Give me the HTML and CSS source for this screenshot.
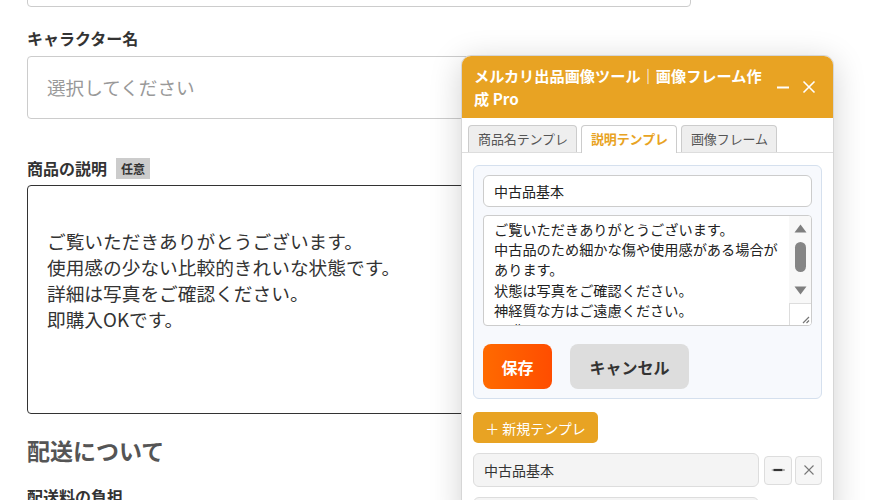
FILE: index.html
```html
<!DOCTYPE html>
<html lang="ja">
<head>
<meta charset="utf-8">
<link rel="stylesheet" href="styles.css">
</head>
<body>
<main class="page">
  <div class="box-top"></div>
  <div class="label">キャラクター名</div>
  <div class="select">選択してください</div>
  <div class="label label-desc">商品の説明<span class="badge">任意</span></div>
  <div class="desc">ご覧いただきありがとうございます。<br>使用感の少ない比較的きれいな状態です。<br>詳細は写真をご確認ください。<br>即購入OKです。</div>
  <h2 class="section">配送について</h2>
  <div class="label label-ship">配送料の負担</div>
</main>

<section class="panel">
  <header class="panel-head">
    <div class="panel-title">メルカリ出品画像ツール｜画像フレーム作成 Pro</div>
    <div class="panel-ctrls">
      <svg width="14" height="14" viewBox="0 0 14 14"><path d="M1 7.5H13" stroke="#fff" stroke-width="2"/></svg>
      <svg width="14" height="14" viewBox="0 0 14 14"><path d="M1.5 1.5L12.5 12.5M12.5 1.5L1.5 12.5" stroke="#fff" stroke-width="1.6"/></svg>
    </div>
  </header>
  <nav class="tabs">
    <div class="tab">商品名テンプレ</div>
    <div class="tab active">説明テンプレ</div>
    <div class="tab">画像フレーム</div>
  </nav>
  <div class="panel-body">
    <div class="editor">
      <div class="name-input">中古品基本</div>
      <div class="ta">
        <div class="ta-text">ご覧いただきありがとうございます。<br>中古品のため細かな傷や使用感がある場合があります。<br>状態は写真をご確認ください。<br>神経質な方はご遠慮ください。<br>即購入OKです。</div>
        <div class="sb">
          <div class="sb-track">
            <svg width="13" height="9" viewBox="0 0 13 9"><path d="M6.5 0.5L12.5 8.5H0.5Z" fill="#7f7f7f"/></svg>
            <div class="sb-thumb"></div>
            <svg width="13" height="9" viewBox="0 0 13 9"><path d="M0.5 0.5H12.5L6.5 8.5Z" fill="#7f7f7f"/></svg>
          </div>
          <div class="sb-corner">
            <svg width="10" height="10" viewBox="0 0 10 10"><path d="M9 3L3 9M9 6.5L6.5 9" stroke="#777" stroke-width="1.2"/></svg>
          </div>
        </div>
      </div>
      <div class="actions">
        <button class="btn-save">保存</button>
        <button class="btn-cancel">キャンセル</button>
      </div>
    </div>
    <button class="btn-new">＋ 新規テンプレ</button>
    <div class="item">
      <div class="item-name">中古品基本</div>
      <button class="ibtn">
        <svg width="16" height="6" viewBox="0 0 16 6"><path d="M1 3L3.5 2.2V3.8Z" fill="#888"/><rect x="3.5" y="1.9" width="9" height="2.2" fill="#333"/><path d="M12.5 2.2H14.8V3.8H12.5Z" fill="#999"/></svg>
      </button>
      <button class="ibtn">
        <svg width="12" height="12" viewBox="0 0 12 12"><path d="M1.5 1.5L10.5 10.5M10.5 1.5L1.5 10.5" stroke="#777" stroke-width="1.1"/></svg>
      </button>
    </div>
    <div class="item">
      <div class="item-name">&nbsp;</div>
      <button class="ibtn"></button>
      <button class="ibtn"></button>
    </div>
  </div>
</section>
</body>
</html>
```

FILE: styles.css
```css
html, body {
  margin: 0;
  padding: 0;
  background: #fff;
  overflow: hidden;
  height: 500px;
}
body {
  font-family: "Noto Sans CJK JP", "Noto Sans", "Liberation Sans", sans-serif;
  color: #333;
}
.page {
  width: 664px;
  padding-left: 27px;
}
.box-top {
  height: 48px;
  margin-top: -43px;
  border: 1px solid #ccc;
  border-radius: 4px;
}
.label {
  font-size: 16px;
  font-weight: 700;
  line-height: 22px;
  color: #333;
  margin-top: 20px;
}
.select {
  margin-top: 7px;
  height: 61px;
  border: 1px solid #ccc;
  border-radius: 4px;
  box-sizing: content-box;
  padding-left: 19px;
  font-size: 18.6px;
  line-height: 60px;
  color: #999;
}
.label-desc {
  margin-top: 38px;
  display: flex;
  align-items: center;
  gap: 9px;
}
.badge {
  background: #ccc;
  color: #333;
  font-size: 12px;
  font-weight: 700;
  line-height: 21px;
  padding: 0 5px;
}
.desc {
  margin-top: 6px;
  box-sizing: border-box;
  height: 229px;
  border: 1px solid #333;
  border-radius: 4px;
  padding: 42px 19px 0;
  font-size: 18.7px;
  line-height: 26px;
  color: #333;
}
.section {
  margin: 21px 0 0;
  font-size: 23px;
  line-height: 30px;
  font-weight: 700;
  color: #555;
}
.label-ship {
  margin-top: 20px;
}

/* panel */
.panel {
  position: absolute;
  left: 461px;
  top: 55px;
  width: 373px;
  height: 470px;
  box-sizing: border-box;
  background: #fff;
  border: 1px solid #d6d6d6;
  border-radius: 10px;
  overflow: hidden;
  box-shadow: 0 6px 32px rgba(0, 0, 0, 0.18);
}
.panel-head {
  background: #e8a323;
  height: 62px;
  box-sizing: border-box;
  display: flex;
  align-items: center;
  padding: 0 17px 0 12px;
  gap: 8px;
}
.panel-title {
  flex: 1;
  color: #fff;
  font-size: 15.2px;
  font-weight: 700;
  line-height: 23px;
}
.panel-ctrls {
  display: flex;
  gap: 12px;
  align-items: center;
}
.tabs {
  display: flex;
  gap: 4px;
  padding: 7px 6px 0;
  border-bottom: 1px solid #ddd;
}
.tab {
  height: 27px;
  box-sizing: border-box;
  padding: 0 8px 0 9px;
  background: #eee;
  border: 1px solid #ccc;
  border-bottom: none;
  border-radius: 4px 4px 0 0;
  font-size: 13px;
  line-height: 26px;
  color: #555;
  margin-bottom: -1px;
  letter-spacing: -0.1px;
}
.tab.active {
  background: #fff;
  color: #e8a323;
  font-weight: 700;
  height: 28px;
}
.panel-body {
  padding: 12px 11px 0;
}
.editor {
  background: #f7f9fd;
  border: 1px solid #d5e0ee;
  border-radius: 6px;
  padding: 9px 9px 9px;
}
.name-input {
  height: 32px;
  box-sizing: border-box;
  background: #fff;
  border: 1px solid #ccc;
  border-radius: 6px;
  padding-left: 10px;
  font-size: 14px;
  line-height: 30px;
  color: #222;
}
.ta {
  margin-top: 8px;
  height: 111px;
  box-sizing: border-box;
  background: #fff;
  border: 1px solid #ccc;
  border-radius: 4px;
  display: flex;
  overflow: hidden;
}
.ta-text {
  flex: 1;
  padding: 3px 10px 0;
  font-size: 14.2px;
  line-height: 20.2px;
  color: #222;
  overflow: hidden;
}
.sb {
  width: 22px;
  display: flex;
  flex-direction: column;
  background: #f8f8f8;
}
.sb-track {
  flex: 1;
  display: flex;
  flex-direction: column;
  align-items: center;
  padding-top: 8px;
}
.sb-thumb {
  width: 11px;
  height: 30px;
  border-radius: 6px;
  background: #858585;
  margin: 9px 0 14px;
}
.sb-corner {
  height: 22px;
  box-sizing: border-box;
  border-top: 1px solid #ddd;
  border-left: 1px solid #ddd;
  background: #fff;
  display: flex;
  align-items: flex-end;
  justify-content: flex-end;
  padding: 0 1px 1px 0;
}
.actions {
  display: flex;
  gap: 18px;
  margin-top: 18px;
}
button {
  font-family: inherit;
  border: none;
  cursor: pointer;
}
.btn-save {
  width: 69px;
  height: 45px;
  border-radius: 8px;
  background: linear-gradient(90deg, #ff6a00, #ff4d00);
  color: #fff;
  font-size: 16px;
  font-weight: 700;
  padding: 0;
}
.btn-cancel {
  width: 119px;
  height: 45px;
  border-radius: 8px;
  background: #ddd;
  color: #333;
  font-size: 16px;
  font-weight: 700;
  padding: 0;
}
.btn-new {
  display: block;
  margin-top: 13px;
  width: 125px;
  height: 31px;
  border-radius: 5px;
  background: #e8a323;
  color: #fff;
  font-size: 14px;
  padding: 0;
}
.item {
  display: flex;
  gap: 4px;
  align-items: center;
  margin-top: 10px;
}
.item-name {
  width: 286px;
  height: 34px;
  box-sizing: border-box;
  background: #f4f4f4;
  border: 1px solid #ddd;
  border-radius: 6px;
  padding-left: 10px;
  font-size: 14px;
  line-height: 32px;
  color: #333;
  margin-right: 1px;
}
.ibtn {
  width: 28px;
  height: 29px;
  box-sizing: border-box;
  background: #f6f6f6;
  border: 1px solid #ddd;
  border-radius: 4px;
  display: flex;
  align-items: center;
  justify-content: center;
  padding: 0;
}
.ibtn + .ibtn {
  width: 27px;
  margin-left: -1px;
}
```
